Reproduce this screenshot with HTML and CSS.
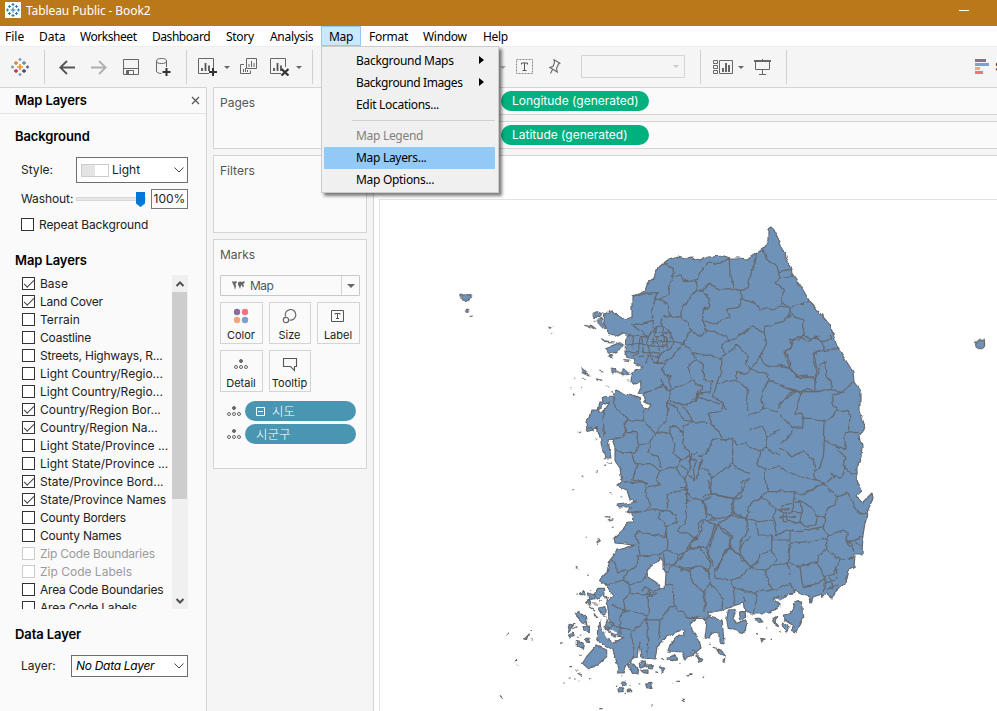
FILE: index.html
```html
<!DOCTYPE html>
<html lang="en">
<head>
<meta charset="utf-8">
<title>Tableau Public - Book2</title>
<link rel="stylesheet" href="styles.css">
</head>
<body>
<header class="titlebar">
  <svg class="app-icon" width="16" height="16" viewBox="0 0 16 16"><rect width="16" height="16" fill="#fff"/><g stroke="#3f7fae" stroke-width="1.2"><path d="M8 5.5v5M5.5 8h5M8 1v3M6.5 2.5h3M8 12v3M6.5 13.5h3M2.5 6.5v3M1 8h3M13.500 6.500v3M12 8h3M4.500 3v3M3 4.500h3M11.500 3v3M10 4.500h3M4.500 10v3M3 11.500h3M11.500 10v3M10 11.500h3"/></g></svg>
  <span class="title">Tableau Public - Book2</span>
  <span class="minimize"></span>
</header>
<nav class="menubar">
  <span class="mi file">File</span><span class="mi data">Data</span><span class="mi worksheet">Worksheet</span><span class="mi dashboard">Dashboard</span><span class="mi story">Story</span><span class="mi analysis">Analysis</span>
  <div class="mi map open">Map
    <div class="dropdown">
      <div class="row">Background Maps<i class="arrow"></i></div>
      <div class="row wide">Background Images<i class="arrow"></i></div>
      <div class="row">Edit Locations...</div>
      <div class="rule"></div>
      <div class="row off">Map Legend</div>
      <div class="row hot">Map Layers...</div>
      <div class="row">Map Options...</div>
    </div>
  </div>
  <span class="mi format">Format</span><span class="mi window">Window</span><span class="mi help">Help</span>
</nav>
<div class="toolbar">
  <svg class="t-logo" width="18" height="18" viewBox="0 0 18 18" fill="none" stroke-width="1.3"><path stroke="#eb912c" stroke-width="1.600" d="M9 6v6M6 9h6"/><path stroke="#e8762c" d="M5 3v4M3 5h4"/><path stroke="#5c8ca8" d="M13 3v4M11 5h4"/><path stroke="#c72035" d="M5 11v4M3 13h4"/><path stroke="#1f457e" d="M13 11v4M11 13h4"/><path stroke="#7b9bb5" d="M9 0v3M7.500 1.500h3M9 15v3M7.500 16.500h3M1.500 7.500v3M0 9h3"/><path stroke="#5b6591" d="M16.500 7.500v3M15 9h3"/></svg>
  <i class="sep s1"></i>
  <svg class="t-back" width="16" height="15" viewBox="0 0 16 15" fill="none" stroke="#555" stroke-width="1.800"><path d="M16 7.500H1M8 1L1.300 7.500 8 14"/></svg>
  <svg class="t-fwd" width="16" height="15" viewBox="0 0 16 15" fill="none" stroke="#b0b0b0" stroke-width="1.800"><path d="M0 7.500h15M8 1l6.700 6.500L8 14"/></svg>
  <svg class="t-save" width="16" height="16" viewBox="0 0 16 16" fill="none" stroke="#666"><path d="M.5.5h15v15H.5zM.5 9.500h15M3.500 15.500v-4h7v4"/><path fill="#666" d="M4 12h2v3H4z" stroke="none"/></svg>
  <svg class="t-db" width="15" height="18" viewBox="0 0 15 18" fill="none" stroke="#666"><ellipse cx="5.500" cy="3" rx="5" ry="2.500"/><path d="M.5 3v10c0 1.500 2 2.500 5 2.500M10.500 3v6"/><path stroke="#333" stroke-width="2" d="M10.500 10v8M6.500 14h8"/></svg>
  <i class="sep s2"></i>
  <svg class="t-new" width="19" height="18" viewBox="0 0 19 18" fill="none"><path stroke="#666" d="M15.500 10V.5H.5v15H11"/><path stroke="#555" stroke-width="1.800" d="M4 13v-3M7.500 13V5M11 13V7.500"/><path stroke="#333" stroke-width="2" d="M15 10v8M11 14h8"/></svg>
  <i class="caret c1"></i>
  <svg class="t-dup" width="17" height="16" viewBox="0 0 17 16" fill="none" stroke="#666"><path d="M6.500.5h10v10h-10zM4 6.500H.5v9h10v-3M9 9V6M11.500 9V3M14 9V5M3.500 14v-3M5.500 14v-4M7.500 14v-2"/></svg>
  <svg class="t-clear" width="19" height="18" viewBox="0 0 19 18" fill="none"><path stroke="#666" d="M15.500 9V.5H.5v15H11"/><path stroke="#555" stroke-width="1.800" d="M4 13v-3M7.500 13V5M11 13V7.500"/><path stroke="#333" stroke-width="2.200" d="M11.500 11l7 6.500M18.500 11l-7 6.500"/></svg>
  <i class="caret c2"></i>
  <i class="sep s3"></i>
  <i class="caret c3"></i>
  <svg class="t-text" width="17" height="15" viewBox="0 0 17 15" fill="none" stroke="#888"><path stroke-dasharray="2 1" d="M.5.500h16v14H.5z"/><path stroke="#555" d="M5.500 5.500V4h6v1.500M8.500 4v7.500M6.500 11.500h4"/></svg>
  <svg class="t-pin" width="13" height="15" viewBox="0 0 13 15" fill="none" stroke="#666" stroke-width="1.100"><path d="M6 .7l6 3.500-1.500.8-2 4.500.8 3.500-7.500-4.500L5 7.500l1.500-4zM4.500 10.500L2.500 14.500"/></svg>
  <span class="fit"><i class="caret"></i></span>
  <i class="sep s4"></i>
  <svg class="t-show" width="20" height="14" viewBox="0 0 20 14" fill="none" stroke="#666"><path d="M.5.500h4v3h-4zM.5 5.500h4v3h-4zM.5 10.500h4v3h-4zM6.500.500h13v13h-13z"/><path stroke-width="2" d="M10 12V8M13 12V3M16 12V5"/></svg>
  <i class="caret c4"></i>
  <svg class="t-present" width="17" height="16" viewBox="0 0 17 16" fill="none" stroke="#666"><path stroke-width="2" d="M0 2h17"/><path d="M8.500 0v1M1.500 3v7.500h14V3M8.500 10.500v5M5 15.500h7"/></svg>
  <i class="sep s5"></i>
  <svg class="t-showme" width="14" height="15" viewBox="0 0 14 15"><path fill="#8a6d9c" d="M0 0h11v3H0z"/><path fill="#7ea1cb" d="M0 4h14v3H0z"/><path fill="#f5a47c" d="M0 8h5v3H0z"/><path fill="#fb7080" d="M0 12h8v3H0z"/></svg>
  <span class="showme">Show Me</span>
</div>
<main class="workspace">
  <aside class="pane">
    <div class="pane-title"><h2>Map Layers</h2><svg width="9" height="9" viewBox="0 0 9 9" stroke="#555" stroke-width="1.200"><path d="M1 1l7 7M8 1L1 8"/></svg></div>
    <h2 class="h-bg">Background</h2>
    <div class="field style"><label>Style:</label><span class="combo c-style"><i class="swatch"></i>Light<svg width="10" height="6" viewBox="0 0 10 6" fill="none" stroke="#444"><path d="M.5.500L5 5 9.500.500"/></svg></span></div>
    <div class="field washout"><label>Washout:</label><span class="track"><svg width="9" height="15" viewBox="0 0 9 15"><path fill="#0078d7" d="M0 0h9v11.500L4.500 15 0 11.500z"/></svg></span><span class="pct">100%</span></div>
    <div class="check repeat"><i class="box"></i>Repeat Background</div>
    <h2 class="h-layers">Map Layers</h2>
    <div class="list">
      <div class="items">
        <div class="check on"><i class="box"></i>Base</div>
        <div class="check on tight"><i class="box"></i>Land Cover</div>
        <div class="check"><i class="box"></i>Terrain</div>
        <div class="check tight"><i class="box"></i>Coastline</div>
        <div class="check tight"><i class="box"></i>Streets, Highways, R...</div>
        <div class="check"><i class="box"></i>Light Country/Regio...</div>
        <div class="check"><i class="box"></i>Light Country/Regio...</div>
        <div class="check on"><i class="box"></i>Country/Region Bor...</div>
        <div class="check on"><i class="box"></i>Country/Region Na...</div>
        <div class="check"><i class="box"></i>Light State/Province ...</div>
        <div class="check"><i class="box"></i>Light State/Province ...</div>
        <div class="check on"><i class="box"></i>State/Province Bord...</div>
        <div class="check on"><i class="box"></i>State/Province Names</div>
        <div class="check tight"><i class="box"></i>County Borders</div>
        <div class="check tight"><i class="box"></i>County Names</div>
        <div class="check off tight"><i class="box"></i>Zip Code Boundaries</div>
        <div class="check off"><i class="box"></i>Zip Code Labels</div>
        <div class="check tight"><i class="box"></i>Area Code Boundaries</div>
        <div class="check tight"><i class="box"></i>Area Code Labels</div>
      </div>
      <div class="scroll"><svg width="16" height="17" viewBox="0 0 16 17" fill="none" stroke="#505050" stroke-width="2"><path d="M4.500 11L8 7.500l3.500 3.500"/></svg><i class="thumb"></i><svg class="down" width="16" height="17" viewBox="0 0 16 17" fill="none" stroke="#505050" stroke-width="2"><path d="M4.500 7L8 10.500 11.500 7"/></svg></div>
    </div>
    <h2 class="h-data">Data Layer</h2>
    <div class="field layer"><label>Layer:</label><span class="combo c-layer"><em>No Data Layer</em><svg width="10" height="6" viewBox="0 0 10 6" fill="none" stroke="#444"><path d="M.5.500L5 5 9.500.500"/></svg></span></div>
  </aside>
  <section class="cards">
    <div class="card pages"><h3>Pages</h3></div>
    <div class="card filters"><h3>Filters</h3></div>
    <div class="card marks"><h3>Marks</h3>
      <div class="mark-type"><svg width="13" height="9" viewBox="0 0 13 9" fill="#666"><path d="M0 0l2 .8L4 0l1 1-1.500 2L4 5 3 9 2 5 .5 2zM6 1.500l2-1 2 .5L12.500 0v2L11 3l1 2-1 1.500L9.500 4 9 4.500 8 8 6.800 5 6 4z"/></svg><span>Map</span><i class="split"><i class="caret"></i></i></div>
      <div class="buttons">
        <div class="btn"><svg width="16" height="16" viewBox="0 0 16 16"><circle cx="4" cy="4" r="3.200" fill="#8a6d9c"/><circle cx="12" cy="4" r="3.200" fill="#fb7080"/><circle cx="4" cy="12" r="3.200" fill="#f5a47c"/><circle cx="12" cy="12" r="3.200" fill="#7ea1cb"/></svg>Color</div>
        <div class="btn"><svg width="16" height="16" viewBox="0 0 16 16" fill="none" stroke="#666" stroke-width="1.200"><path d="M3.500 8.500A5.300 5.300 0 1 1 7.500 12"/><circle cx="4" cy="12" r="2.700"/></svg>Size</div>
        <div class="btn"><svg width="16" height="16" viewBox="0 0 16 16" fill="none" stroke="#555"><path d="M1.500 2.500h12v11h-12zM5 6.500V5.500h5v1M7.500 5.500v5M6 10.500h3"/></svg>Label</div>
        <div class="btn"><svg width="16" height="16" viewBox="0 0 16 16" fill="none" stroke="#666"><circle cx="8" cy="5" r="1.500" fill="#666"/><circle cx="3" cy="11" r="1.500"/><circle cx="8" cy="11" r="1.500"/><circle cx="13" cy="11" r="1.500"/></svg>Detail</div>
        <div class="btn"><svg width="16" height="16" viewBox="0 0 16 16" fill="none" stroke="#555" stroke-width="1.100"><path d="M1.500 2.500h13v8h-2v4l-4-4h-7z"/></svg>Tooltip</div>
      </div>
      <div class="mark-pill"><svg width="16" height="12" viewBox="0 0 16 12" fill="none" stroke="#666"><circle cx="8" cy="3" r="1.500" fill="#666"/><circle cx="3" cy="9" r="1.500"/><circle cx="8" cy="9" r="1.500"/><circle cx="13" cy="9" r="1.500"/></svg><span class="pill"><svg width="9" height="9" viewBox="0 0 9 9" fill="none" stroke="#fff"><path d="M.5.500h8v8h-8zM2 4.500h5"/></svg>시도</span></div>
      <div class="mark-pill"><svg width="16" height="12" viewBox="0 0 16 12" fill="none" stroke="#666"><circle cx="8" cy="3" r="1.500" fill="#666"/><circle cx="3" cy="9" r="1.500"/><circle cx="8" cy="9" r="1.500"/><circle cx="13" cy="9" r="1.500"/></svg><span class="pill">시군구</span></div>
    </div>
  </section>
  <section class="sheet">
    <div class="shelf"><span class="green">Longitude (generated)</span></div>
    <div class="shelf"><span class="green">Latitude (generated)</span></div>
    <div class="view"><div class="viz">
<svg width="617" height="511" viewBox="380 200 617 511">
<defs><filter id="coast" filterUnits="userSpaceOnUse" x="380" y="200" width="617" height="511" color-interpolation-filters="sRGB"><feTurbulence type="fractalNoise" baseFrequency="0.14" numOctaves="2" seed="4"/><feDisplacementMap in="SourceGraphic" scale="4.4" xChannelSelector="R" yChannelSelector="G"/></filter></defs>
<g filter="url(#coast)" fill="#6f92b9" stroke="#66696e" stroke-width="1.200" stroke-linejoin="round">
<!-- mainland -->
<path d="M771 227L768 229 768 240 765 247 757 253 748 259 739 258 730 258 724 256 708 257 700 261 692 257 685 259 678 257 669 260 656 270 653 278 647 285 645 291 632 297 632 317 625 319 619 317 611 310 605 314 604 320 607 333 618 336 623 333 631 335 626 337 625 353 628 359 633 359 634 363 643 367 632 372 630 380 635 384 642 382 637 393 643 395 645 402 651 405 648 409 644 408 640 399 633 396 624 394 617 391 613 396 603 397 604 403 600 403 598 410 592 410 590 418 586 422 587 430 593 430 597 427 600 437 603 452 605 458 611 458 608 440 612 439 615 447 615 461 620 468 622 482 617 486 627 490 630 500 637 502 618 505 619 507 632 507 627 512 632 514 633 522 628 522 625 528 614 538 615 543 635 545 618 550 610 560 607 572 600 580 605 584 613 595 607 600 609 618 615 626 609 624 605 629 610 633 618 635 623 638 613 643 607 638 602 629 601 621 598 628 597 637 600 643 613 649 616 663 619 668 618 673 623 673 627 665 633 658 638 657 640 643 642 658 655 659 657 647 667 637 680 630 685 630 684 636 679 635 670 645 668 651 682 652 685 660 690 657 701 648 699 640 692 630 691 623 698 617 703 617 707 623 705 637 709 638 712 632 719 633 719 643 724 644 723 630 722 620 709 617 708 613 723 610 733 606 743 603 745 611 752 613 770 613 780 605 773 599 780 595 795 593 790 583 793 590 803 595 810 597 811 603 813 597 822 594 823 598 827 593 832 598 835 592 845 583 848 570 854 567 855 554 862 554 863 535 865 523 868 510 873 498 872 493 863 502 857 497 861 491 857 480 857 467 861 457 862 447 860 435 865 427 860 412 860 390 854 382 853 372 838 348 834 337 830 325 810 302 803 290 793 275 790 267 780 243 774 230Z"/>
<!-- northern districts -->
<g transform="translate(620 220) scale(.3333)" fill="none" stroke-width="3.700">
<path d="M135 132L160 145 158 172 145 200 148 225 120 235 105 240 95 270 100 300 70 310 36 315M36 232L75 220 115 218 105 240M158 172L185 162 195 185 230 182 240 160 262 130 300 130 328 115 330 170 342 205M230 182L228 210 205 240 190 260 183 290 150 292 145 260 120 235M228 210L250 215 265 190 300 208 342 205 362 212M410 100L405 130 390 160 385 205 362 212 362 235M250 215L268 240 265 260 250 270 248 300 290 315 305 298 330 290 320 268 355 262 362 235 405 250 425 272 440 262 460 270 480 258 510 262M428 88L440 115 470 140 475 155 512 148M475 155L480 175 520 165M480 175L468 185 490 210 485 248 510 262 570 243M510 262L510 285 490 305 435 320 432 335 395 320 370 340 330 360 305 375 315 400 305 415 220 398M248 300L260 332 290 335 330 360M183 290L205 310 210 330 235 350 260 332M210 330L190 370 215 395 230 420M510 262L520 290 552 300 550 345 575 360 600 350M550 345L535 360 510 355 512 380 495 395 512 430 505 440 540 475 580 470 590 490M432 335L440 370 425 400 420 410 430 430 450 440 475 435 510 440M315 400L345 385 350 375 385 410 375 435 395 450 420 410M395 450L440 460 445 480 425 520 430 570M305 415L305 450 290 490 325 485 350 480 350 455 375 460 395 450M290 490L280 530 300 540 320 570M350 480L385 510 380 570M225 420L250 430 250 480 275 485 270 515 230 520 230 545M225 420L200 440 215 480 245 500 240 520M215 480L180 500 150 510 145 540 190 555 230 545M145 540L140 570M150 510L150 470 125 450 135 430 100 430M100 430L150 420 190 370 160 365M445 480L485 495 525 515 600 515M525 515L510 530 480 545 475 570M600 390L580 400 590 440 590 480"/>
<path d="M36 315L85 350M15 345L60 350 85 350 110 320 130 318 145 330 160 360 155 385 120 400 90 395 80 370 85 350M20 375L60 370 80 375M60 350L55 400 35 410M15 395L55 395M110 320L105 350 145 350M95 335L125 340 150 335M90 365L155 365M110 350L115 390M130 318L130 385M85 380L140 375M65 345L70 395 90 395 80 430M90 400L100 430M120 400L110 430M60 410L85 405 110 412 130 395M40 350L38 385M125 345L145 360M100 350L95 375M140 350L142 385M120 480L150 520M70 520L100 510 130 495M100 300L98 325M125 295L122 318M130 290L150 292"/>
</g>
<!-- eastern districts -->
<g transform="translate(780 290) scale(.3333)" fill="none" stroke-width="3.700">
<path d="M60 140L40 145 30 175 12 185 30 235 50 262 75 258 105 270 110 240 98 210 110 185 175 175M85 155L105 140 125 155 155 150 150 135M60 140L85 155M125 155L130 170 128 182M105 270L115 250 120 225 135 215 138 260 158 275 155 298M0 285L45 300 65 312 85 295 105 305 155 298 185 308 222 275M105 270L105 305M0 230L30 235M185 308L158 318 160 345 172 360 205 362 210 385 205 425 240 430M172 360L160 375 135 395M62 312L50 350 45 370 65 370 72 385 100 385 135 395 133 450 130 500 118 535 105 545 105 575M70 385L68 415 35 412M0 340L25 315 45 300M0 375L20 395 35 412 35 430 0 465M133 450L160 465 195 478 195 430 205 425M172 478L195 500 190 525 210 548 230 550M0 475L40 500 70 482 100 510 105 545M0 535L50 555 105 570 130 582 165 560 150 550 185 562 200 530"/>
</g>
<!-- western and central districts -->
<g transform="translate(560 390) scale(.3333)" fill="none" stroke-width="3.700">
<path d="M160 10L165 50 205 90 250 92 255 55M205 90L195 100 200 125 190 140 155 148M135 45L130 80 133 145M200 125L228 125 235 165M250 92L285 130 320 95 325 40 330 0M285 130L270 160 235 165 225 190 180 190 165 175M270 160L265 185 295 200 300 230M215 190L222 215 230 225 218 270 262 280M230 225L270 220 300 240 290 265 300 285 262 290M300 240L330 232 350 235 365 210M290 125L330 130 330 110 350 110 370 130 365 160 385 185M330 130L345 160 340 190 365 210 385 200 410 210M320 40L350 50 370 90 400 95 370 110 370 130M330 35L380 45 410 20 455 35 490 45 485 60 445 70 455 100 475 125 490 150 520 145 530 165 555 160 570 170M370 50L400 95 445 100M410 20L415 0M490 150L460 145 445 170 440 190 415 200M520 145L515 180 515 220 530 235 570 250M425 205L420 235 445 240 455 265 490 240 515 220M455 265L450 285 455 310 495 322 520 325 545 300 540 280 570 265M350 235L360 250 375 265 380 280 375 300 325 310 325 330 320 362 265 360M375 300L395 320 430 335 450 320 455 310M187 275L255 280 262 320 270 350 260 362 215 370M380 300L380 360 375 400 360 410 355 420M430 335L440 370 465 390 430 390 425 420 410 445 355 420M320 362L345 375 350 395 335 405 320 410 310 395 295 385 300 365M320 410L315 440 235 425 225 435 235 465 240 495 260 500 300 490 320 480M320 430L320 480 355 495 390 480 390 460 410 445M465 390L510 375 520 355 525 325M510 375L550 385 570 365M465 400L500 420 515 440 505 470 540 500 540 470 570 440M465 400L455 440 440 475 460 530M355 495L350 520M390 480L430 470 440 475M505 470L490 500 470 540M385 185L390 230 375 265M410 210L400 240 405 270 385 255M425 205L415 235 410 265M395 190L385 245 365 225M400 195L415 190"/>
</g>
<!-- districts between the river basins -->
<path fill="none" d="M747 415L756 413 765 408 778 412M750 430L762 426 768 436 780 430M768 436L766 448 780 456M750 447L760 451 766 448M760 451L757 464 766 470 780 466M763 408L762 400M766 470L764 480"/>
<!-- south-western districts -->
<g transform="translate(490 530) scale(.3333)" fill="none" stroke-width="3.700">
<path d="M365 90L380 105 382 125 415 122M442 75L442 110 415 122 400 150 345 163M445 75L480 78M520 70L525 105 550 105 585 70M550 105L600 125 605 155 640 185 645 230M550 105L525 130M525 160L550 165 552 225M400 150L420 165 420 190 460 195 475 190M420 165L460 150 470 130M420 190L400 210 405 240 365 225M405 240L390 260 390 315M460 195L500 190 475 200 475 255 405 240M475 255L470 270 510 270 540 230 555 230 600 265 645 265 660 255M425 300L445 290 470 265 475 300 470 380M425 300L430 385M510 270L505 330M455 185L465 170 490 185 510 175M475 175L480 195M605 155L600 120 620 108 645 115 660 135M380 290L425 300"/>
</g>
<!-- south-eastern districts -->
<g transform="translate(680 480) scale(.3333)" fill="none" stroke-width="3.700">
<path d="M0 20L20 30 20 60 70 60 80 85 75 120 60 125 50 170 20 205M85 0L90 40 72 55M90 40L160 55 155 90 160 100 110 135 75 120M160 55L185 50 185 30 205 0M255 0L262 35 345 35 340 65M262 35L245 50 205 80 200 115 160 100M200 115L235 125 280 120 285 85 245 50M285 85L310 100 340 95 340 65 360 62 365 100 340 95M310 100L310 125 360 125 365 100M295 90L330 85M320 95L325 125M300 110L350 112M335 70L310 75 300 95M365 45L430 10 470 50 465 75 440 85 435 110 415 112 400 90 370 65 360 62M345 35L365 45M400 0L430 10M470 50L505 40 530 95 565 105M415 112L410 135 370 140 360 125M435 110L430 140 445 165 440 185M430 140L360 155 320 150 290 165 280 120M445 165L490 150 505 160 500 190 525 210M500 190L548 170M515 190L525 215M525 185L540 200M200 115L205 150 180 190 180 220 210 260 230 250 240 225 275 210 275 165 235 165 230 130M275 180L330 180 330 150M275 210L290 240 280 255 325 250 330 190 380 185 430 175 440 185 440 210 415 225 410 245 360 260 330 250M110 135L150 170 150 200M150 200L210 262 185 290 155 300 105 295M110 135L90 200 85 240M150 200L105 270 105 295M210 262L255 270 260 290 275 330M255 270L280 255M155 300L160 325 225 340 230 360 220 395M225 340L245 330 290 330 330 310M325 250L330 285M360 260L365 300 370 320 415 310 435 290 410 245M440 210L480 240 525 230M480 240L470 265 470 300M435 290L455 285 470 265M435 290L430 340M450 290L460 325M430 310L465 300M440 325L475 315M0 270L30 265 60 258 85 275 90 310 75 330 75 395M90 310L130 355 125 390M0 240L25 205 60 205 90 245 85 275M160 325L165 375M190 350L200 370"/>
</g>
<!-- lagoon and inlets -->
<path fill="#fff" d="M660 556L663 562 663 568 666 573 665 590 660 588 657 583 648 577 647 572 650 565 657 562Z"/>
<path fill="#fff" d="M603 405L610 402 606 408 602 412 599 410Z"/>
<!-- north-western islands -->
<g transform="translate(440 220) scale(.3333)" stroke-width="3.600">
<path d="M60 226L90 224 92 232 80 242 66 240ZM78 268L86 268 84 277 77 276ZM88 290L98 288 92 292ZM326 318L334 320 329 326ZM333 340h3M460 280L470 275 488 282 480 292 460 292ZM475 300L485 295 487 308 500 318 494 328 480 315ZM436 316L455 320 468 330M462 304h8M484 358L490 364 525 366M496 385L540 368 550 375 530 395 510 400ZM506 408L514 406 515 416 508 414ZM550 422L568 424M426 442L450 468 430 458ZM478 450L490 454M514 448L526 444 530 452 520 460ZM534 452L545 462 550 446 568 462 552 468ZM466 476L486 482M400 472h4M430 478h4M392 506h4M424 502h4M401 520L406 526M500 498h4M512 514L518 518M440 628L450 622 462 630 445 634ZM414 638L422 636M464 656h4M560 480h4"/>
<path d="M584 157L599 153 613 148 614 165 602 178 585 170Z" transform="translate(1020 210)"/>
</g>
<!-- west-coast islets -->
<g transform="translate(560 390) scale(.3333)" stroke-width="4.500">
<path d="M130 228L136 224M142 216L156 220M110 240v8M40 12L44 16M65 262h4M38 296h4M152 308h4M182 321h4M138 380h6M148 378v6M144 390L160 386M156 412h4M74 443h4M108 460L120 452 118 445M50 533h4M132 206h4"/>
</g>
<!-- south-western archipelago -->
<g transform="translate(490 530) scale(.3333)" stroke-width="3.600">
<path d="M318 348L350 360 350 380 328 400 295 416 278 400 290 380ZM268 192L282 178 285 198ZM320 178L340 178 342 192 328 206 312 196ZM284 218L296 208 300 226ZM295 192L315 194 318 206 300 208ZM342 198L352 200 348 206M300 230L315 240M305 222L325 222M326 234L345 230 345 250 335 254ZM325 212L338 215M255 252L270 242 278 260 285 258 290 280 275 275ZM232 288L252 284 235 305ZM236 312L250 306 252 320 240 322ZM276 290L298 288 298 308 280 302ZM262 335L280 340 278 358 262 350ZM288 325L300 325 298 335 286 332ZM268 376h4M318 40L330 30M284 23h4M262 114h4M292 133h4M50 318L58 308M104 326L118 312 112 330ZM122 302h4M122 327h4M76 389h5M80 404h5M210 340L218 338M238 410h8M256 420h10M260 430L276 436M236 444h6M252 450h5M266 454h5M220 459h4M300 446h4M30 496L38 506M328 536h10M415 404L430 402 446 420 445 432 428 428ZM448 400L465 392 468 405 450 412ZM470 405L490 404 486 414 472 412ZM452 420L474 420 474 430 460 428ZM494 424L504 428M510 410L524 415 516 428M514 388L522 392M535 382L552 376 562 385 545 392 535 390ZM470 462L482 460 486 472 474 474ZM396 456L408 456 408 468 398 468ZM384 478L394 472 400 484 386 486ZM412 480h10v5h-10zM420 466v5M380 466h5M404 490h4M444 462h4M394 438h4M484 528h5M562 454h8M546 460h4M592 438L604 434M576 510L584 516M640 442h4M570 400v5M600 370h4M618 375L636 390 628 396ZM260 192h4M302 178v4M312 250L320 262M288 276L292 290M318 262h6M340 260L350 262M250 296L262 290M268 315h6M262 322h4"/>
<path d="M340 300L360 320 375 330 365 336M345 310L355 328M355 300L380 310" fill="none" stroke="#fff" stroke-width="6"/>
<path d="M352 270L370 280 358 292 345 288ZM362 312L378 318 372 326M350 296L362 302"/>
</g>
<!-- southern islands -->
<g transform="translate(680 480) scale(.3333)" stroke-width="3.600">
<path d="M145 390L160 388 165 400 158 415 172 430 182 425 195 420 200 430 195 458 175 455 165 448 145 445 140 420ZM178 395L198 395 200 412 182 418ZM290 410L285 430 295 440 282 432 276 415ZM340 385L345 370 355 362 365 368 368 410 360 430 345 458 335 455 340 435 325 425 312 420 310 405 330 402ZM305 425L330 440 320 455 308 440ZM300 375L312 368 305 392M290 350L325 345 315 365 300 365M225 415L240 415 250 428 240 430ZM228 460L236 464M242 478L256 480 246 484ZM272 478h4M258 444h4M210 402h5M110 505L125 512 136 528 132 545 135 528 120 522ZM95 498L110 502M45 515L55 525M58 535L68 538 65 546 55 542ZM35 510L46 512M88 490h4M22 588L34 586M68 592h4M5 658h10M300 452v6"/>
<path fill="#fff" stroke="none" d="M300 365L325 340 358 350 340 375 318 385 320 398 305 400Z"/>
</g>
</g>
</svg>
    </div></div>
  </section>
</main>
</body>
</html>
```
FILE: styles.css
```css
* { box-sizing: border-box; }
body { margin: 0; width: 997px; height: 711px; overflow: hidden; display: flex; flex-direction: column; background: #f5f5f5; color: #222; font: 12px/18px Inter, "Noto Sans CJK KR", sans-serif; }
svg { flex: none; display: block; }
i { flex: none; }
h2, h3 { margin: 0; }

.titlebar { height: 26px; flex: none; background: #b9791a; color: #fff; display: flex; align-items: flex-start; padding: 2px 28px 0 5px; font: 12px/18px "Noto Sans", sans-serif; }
.title { margin-left: 5px; letter-spacing: -.1px; }
.minimize { width: 10px; height: 1px; background: #fff; margin: 8px 0 0 auto; }

.menubar { height: 20px; flex: none; background: #fff; display: flex; color: #000; font: 12px/21px "Noto Sans", sans-serif; padding-left: 5px; white-space: nowrap; letter-spacing: -.3px; }
.mi { flex: none; height: 20px; }
.file { width: 34px; letter-spacing: 0; }
.data { width: 41px; letter-spacing: 0; }
.worksheet { width: 72px; letter-spacing: -.45px; }
.dashboard { width: 74px; letter-spacing: -.45px; }
.story { width: 44px; }
.analysis { width: 51px; }
.open { position: relative; width: 40px; padding-left: 7px; border: 1px solid #90c8f6; background: #cce8ff; line-height: 20px; }
.format { width: 54px; margin-left: 8px; }
.window { width: 60px; }
.dropdown { position: absolute; z-index: 5; left: -1px; top: 19px; width: 178px; height: 147px; padding: 3px 3px 2px 2px; border: 1px solid #ccc; background: #f0f0f0; box-shadow: 3px 3px 3px rgba(0,0,0,.5); }
.row { display: flex; align-items: center; justify-content: space-between; height: 22px; padding: 0 11px 0 32px; }
.wide { letter-spacing: -.4px; }
.arrow { border: 4px solid transparent; border-left: 5px solid #000; border-right: 0; margin-top: -2px; }
.rule { height: 1px; margin: 4px 0 4px 28px; background: #d0d0d0; }
.off { color: #808080; }
.hot { background: #91c9f7; }

.toolbar { height: 41px; flex: none; display: flex; align-items: center; border-top: 1px solid #eee; overflow: hidden; }
.sep { width: 1px; height: 34px; background: #d0d0d0; }
.caret { width: 0; height: 0; border: 3px solid transparent; border-top: 3px solid #666; border-bottom: 0; }
.t-logo { margin-left: 11px; margin-top: -1px; }
.s1 { margin-left: 15px; }
.t-back { margin-left: 14px; }
.t-fwd { margin-left: 16px; }
.t-save { margin-left: 16px; }
.t-db { margin-left: 17px; }
.s2 { margin-left: 15px; }
.t-new { margin-left: 11px; }
.c1 { margin-left: 7px; }
.t-dup { margin-left: 10px; margin-top: -2px; }
.t-clear { margin-left: 13px; }
.c2 { margin-left: 7px; }
.s3 { margin-left: 10px; }
.c3 { margin-left: 187px; opacity: .5; }
.t-text { margin-left: 10px; margin-top: -1px; }
.t-pin { margin-left: 15px; margin-top: -1px; }
.fit { width: 104px; height: 23px; margin-left: 20px; margin-top: -1px; flex: none; border: 1px solid #d4d4d4; border-radius: 1px; display: flex; align-items: center; justify-content: flex-end; padding-right: 5px; }
.fit .caret { opacity: .3; }
.s4 { margin-left: 15px; }
.t-show { margin-left: 12px; }
.c4 { margin-left: 5px; }
.t-present { margin-left: 10px; }
.s5 { margin-left: 15px; }
.t-showme { margin-left: 188px; margin-top: -1px; }
.showme { margin-left: 6px; flex: none; white-space: nowrap; }

.workspace { flex: 1; min-height: 0; display: grid; grid-template-columns: 207px 166px 1fr; }
.pane { background: #fafafa; border-top: 1px solid #d4d4d4; border-right: 1px solid #d4d4d4; overflow: hidden; }
.pane h2 { font: 600 13px/18px Inter, sans-serif; color: #000; padding-left: 15px; letter-spacing: -.1px; }
.pane-title { height: 26px; display: flex; justify-content: space-between; align-items: center; padding: 0 6px 1px 0; border-bottom: 1px solid #e4e4e4; }
.pane .h-bg { margin-top: 13px; }
.field { display: flex; align-items: center; padding-left: 21px; }
.style { margin-top: 12px; height: 26px; }
.style label { width: 55px; }
.combo { display: flex; align-items: center; background: #fff; border: 1px solid #6e6e6e; }
.combo svg { margin-left: auto; margin-right: 3px; }
.c-style { width: 112px; height: 26px; padding-left: 4px; }
.swatch { width: 28px; height: 13px; margin-right: 3px; border: 1px solid #ccc; background: linear-gradient(90deg, #e4e4e4 50%, #fff 50%); }
.washout { height: 20px; margin-top: 6px; }
.washout label { width: 55px; letter-spacing: -.1px; }
.track { width: 70px; height: 4px; background: #e6e6e6; border: 1px solid #d6d6d6; display: flex; align-items: center; justify-content: flex-end; }
.pct { width: 37px; height: 20px; margin-left: 5px; border: 1px solid #777; background: #fff; text-align: center; }
.check { display: flex; align-items: center; height: 18px; white-space: nowrap; }
.tight { letter-spacing: -.22px; }
.box { width: 13px; height: 13px; margin: -1px 5px 0 0; border: 1px solid #333; background: #fff; display: flex; align-items: center; justify-content: center; }
.on .box::after { content: ""; width: 9px; height: 4px; border: solid #444; border-width: 0 0 1.500px 1.500px; transform: translateY(-1px) rotate(-45deg); }
.check.off { color: #9a9a9a; }
.off .box { border-color: #ccc; }
.repeat { margin: 7px 0 0 21px; letter-spacing: -.12px; }
.pane .h-layers { margin-top: 17px; }
.list { height: 334px; margin: 6px 18px 0 22px; display: flex; justify-content: space-between; overflow: hidden; }
.scroll { width: 16px; background: #f0f0f0; }
.thumb { display: block; width: 15px; height: 207px; background: #cdcdcd; }
.down { margin-top: 93px; }
.pane .h-data { margin-top: 16px; }
.layer { margin-top: 12px; height: 22px; }
.layer label { width: 50px; }
.c-layer { width: 117px; height: 22px; padding-left: 4px; color: #000; letter-spacing: -.3px; }

.cards { display: flex; flex-direction: column; gap: 6px; padding: 0 6px; }
.card { width: 154px; border: 1px solid #d4d4d4; background: #fafafa; padding: 6px; }
.card h3 { font: 12px/18px Inter, sans-serif; color: #555; }
.pages { height: 62px; }
.filters { height: 78px; }
.marks { height: 230px; }
.mark-type { height: 21px; margin-top: 11px; border: 1px solid #c8c8c8; display: flex; align-items: center; padding-left: 11px; color: #555; border-radius: 1px; }
.mark-type span { margin-left: 5px; letter-spacing: -.5px; }
.split { display: flex; align-items: center; justify-content: center; margin-left: auto; width: 18px; height: 19px; border-left: 1px solid #d4d4d4; }
.split .caret { border-width: 4px 4px 0; }
.buttons { display: grid; grid-template-columns: 43px 42px 43px; gap: 6px; margin-top: 6px; margin-bottom: 9px; }
.btn { height: 42px; border: 1px solid #d4d4d4; display: flex; flex-direction: column; align-items: center; padding: 5px 1px 0 0; gap: 2px; font-size: 11px; color: #222; }
.mark-pill { display: flex; align-items: center; gap: 3px; height: 20px; margin: 1px 0 3px 6px; }
.pill { width: 111px; height: 20px; border-radius: 10px; background: #4996b2; color: #fff; display: flex; align-items: center; gap: 7px; padding-left: 11px; font: 300 12.500px/20px "Noto Sans CJK KR", sans-serif; }

.sheet { display: flex; flex-direction: column; gap: 6px; min-width: 0; }
.shelf { height: 28px; flex: none; border: 1px solid #d4d4d4; border-right: 0; background: #fafafa; display: flex; align-items: center; padding-left: 127px; }
.green { width: 148px; height: 20px; border-radius: 10px; background: #00b180; color: #fff; line-height: 20px; padding-left: 11px; }
.view { flex: 1; border: 1px solid #d4d4d4; border-right: 0; border-bottom: 0; background: #fff; padding: 43px 0 0 5px; }
.viz { border: 1px solid #e2e2e2; border-right: 0; border-bottom: 0; }
```
